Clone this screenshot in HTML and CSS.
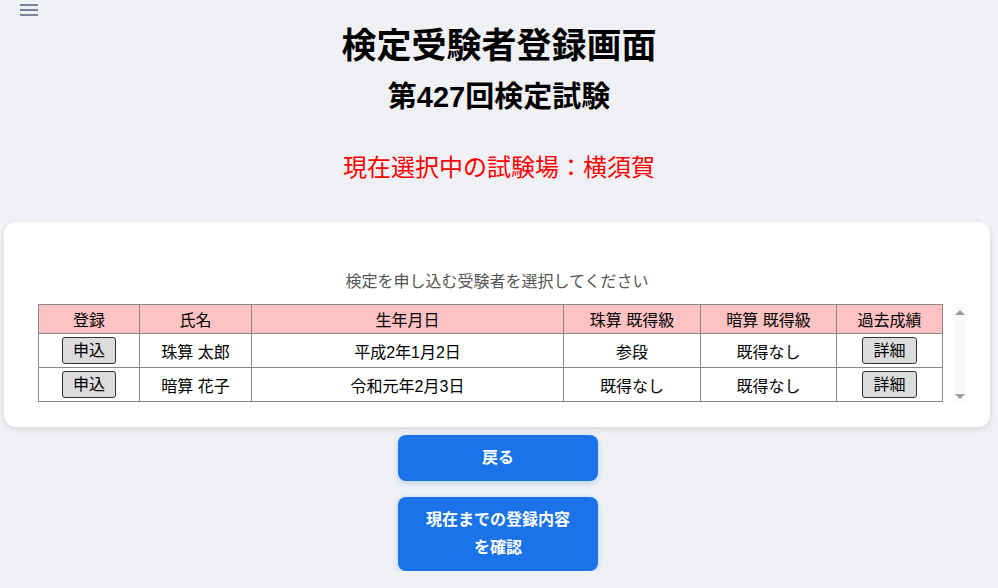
FILE: index.html
```html
<!DOCTYPE html>
<html lang="ja">
<head>
    <meta charset="UTF-8">
    <meta name="viewport" content="width=device-width, initial-scale=1.0">
    <title>検定受験者登録画面</title>
    <link rel="stylesheet" href="styles.css">
</head>
<body>
    <div class="top-bar">
        <button class="menu-button" aria-label="メニュー">
            <svg width="18" height="12" viewBox="0 0 18 12">
                <rect x="0" y="0" width="18" height="2" fill="#7d819c"/>
                <rect x="0" y="5" width="18" height="2" fill="#7d819c"/>
                <rect x="0" y="10" width="18" height="2" fill="#7d819c"/>
            </svg>
        </button>
    </div>

    <h1 class="page-title">検定受験者登録画面</h1>
    <h2 class="exam-title">第427回検定試験</h2>
    <p class="venue">現在選択中の試験場：横須賀</p>

    <div class="card">
        <p class="guide">検定を申し込む受験者を選択してください</p>
        <div class="table-area">
            <table class="examinee-table">
                <colgroup>
                    <col style="width: 101px">
                    <col style="width: 112px">
                    <col style="width: 312px">
                    <col style="width: 137px">
                    <col style="width: 136px">
                    <col style="width: 106px">
                </colgroup>
                <thead>
                    <tr>
                        <th>登録</th>
                        <th>氏名</th>
                        <th>生年月日</th>
                        <th>珠算 既得級</th>
                        <th>暗算 既得級</th>
                        <th>過去成績</th>
                    </tr>
                </thead>
                <tbody>
                    <tr>
                        <td><button class="cell-button">申込</button></td>
                        <td>珠算 太郎</td>
                        <td>平成2年1月2日</td>
                        <td>参段</td>
                        <td>既得なし</td>
                        <td><button class="cell-button">詳細</button></td>
                    </tr>
                    <tr>
                        <td><button class="cell-button">申込</button></td>
                        <td>暗算 花子</td>
                        <td>令和元年2月3日</td>
                        <td>既得なし</td>
                        <td>既得なし</td>
                        <td><button class="cell-button">詳細</button></td>
                    </tr>
                </tbody>
            </table>
            <!-- scrollbar track (classic style) -->
            <div class="scroll-track">
                <span class="arrow-up"></span>
                <span class="arrow-down"></span>
            </div>
        </div>
    </div>

    <div class="actions">
        <button class="action-button">戻る</button>
        <button class="action-button">現在までの登録内容を確認</button>
    </div>
</body>
</html>
```

FILE: styles.css
```css
body {
    margin: 0;
    background-color: #eff1f5;
    font-family: "Liberation Sans", "Noto Sans CJK JP", sans-serif;
    color: #000;
}

/* Top bar */
.top-bar {
    height: 18px;
    padding-left: 20px;
    box-sizing: border-box;
}

.menu-button {
    display: block;
    padding: 4px 0 0 0;
    border: none;
    background: none;
    line-height: 0;
    cursor: pointer;
}

/* Headings */
.page-title {
    margin: 7px 0 0;
    font-size: 35px;
    line-height: 42px;
    font-weight: bold;
    text-align: center;
}

.exam-title {
    margin: 13px 0 0;
    font-size: 29px;
    line-height: 34px;
    font-weight: bold;
    text-align: center;
}

.venue {
    margin: 38px 0 0;
    font-size: 24px;
    line-height: 32px;
    color: #ff0000;
    text-align: center;
}

/* Card */
.card {
    margin: 38px 8px 0 4px;
    padding: 48px 0 25px;
    background-color: #fff;
    border-radius: 12px;
    box-shadow: 0 2px 6px rgba(0, 0, 0, 0.12);
}

.guide {
    margin: 0 0 10px;
    font-size: 16px;
    line-height: 24px;
    color: #555;
    text-align: center;
}

.table-area {
    display: flex;
    align-items: stretch;
    gap: 10px;
    margin: 0 24px 0 34px;
}

.examinee-table {
    width: 904px;
    border-collapse: collapse;
    table-layout: fixed;
    font-size: 16px;
}

.examinee-table th,
.examinee-table td {
    border: 1px solid #888;
    text-align: center;
    font-weight: normal;
}

.examinee-table th {
    height: 28px;
    padding: 0 4px;
    background-color: #ffc2c2;
}

.examinee-table td {
    height: 33px;
    padding: 0 4px;
}

.cell-button {
    font-family: inherit;
    font-size: 16px;
    line-height: 21px;
    padding: 2px 10px;
    background-color: #dcdcdc;
    border: 1px solid #333;
    border-radius: 3px;
    color: #000;
}

.scroll-track {
    flex: 0 0 14px;
    display: flex;
    flex-direction: column;
    justify-content: space-between;
    align-items: center;
    padding: 6px 0 3px;
    background-color: #fafafa;
}

.arrow-up,
.arrow-down {
    display: block;
    width: 0;
    height: 0;
    border-left: 5px solid transparent;
    border-right: 5px solid transparent;
}

.arrow-up {
    border-bottom: 5px solid #9a9a9a;
}

.arrow-down {
    border-top: 5px solid #9a9a9a;
}

/* Bottom buttons */
.actions {
    display: flex;
    flex-direction: column;
    align-items: center;
    gap: 16px;
    margin-top: 8px;
    padding-right: 2px;
}

.action-button {
    width: 200px;
    padding: 9px 26px;
    border: none;
    border-radius: 8px;
    background-color: #1a73e8;
    color: #fff;
    font-family: inherit;
    font-size: 16px;
    font-weight: bold;
    line-height: 28px;
    box-shadow: 0 2px 6px rgba(26, 115, 232, 0.25);
    cursor: pointer;
}
```
